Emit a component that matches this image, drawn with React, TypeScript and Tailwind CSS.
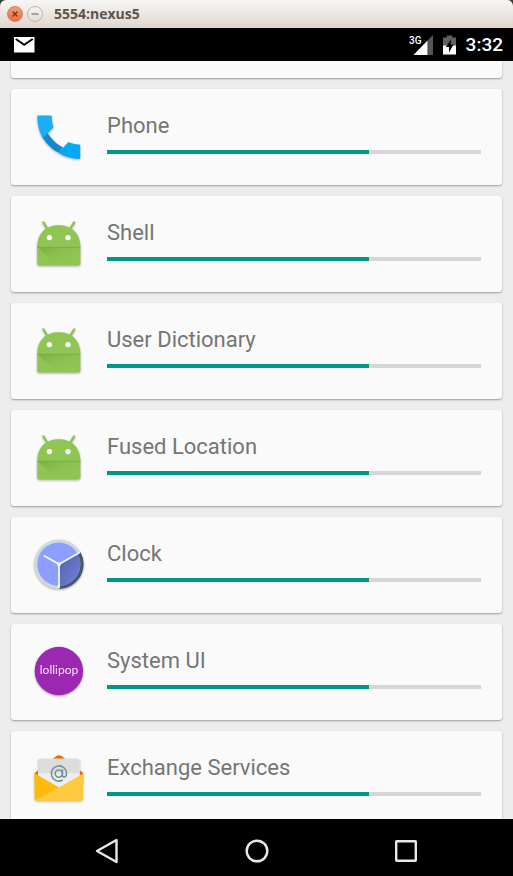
import { useId } from 'react';
import type { ReactNode } from 'react';

function PhoneIcon() {
  return (
    <svg viewBox="0 0 52 52" className="size-[52px] drop-shadow-[0_1px_1px_rgba(0,0,0,0.3)]" aria-hidden="true">
      <path d="M14 21 L9.5 26.5 C13.5 33 19 38.5 25.7 41.8 L30 36.5 C23 33 18.5 28 14 21Z" fill="#0f8ad0" />
      <path d="M5.3 4.6 H17.7 Q18.7 4.6 18.7 5.6 C18.8 9 19.4 12.5 20.4 16.5 L15 22 L9.7 27.2 C6 20.5 4.3 14 4.3 5.6 Q4.3 4.6 5.3 4.6Z" fill="#1caef5" />
      <path d="M35.3 31.2 C39 32.5 42 33.2 46 33.4 Q47.2 33.5 47.2 34.5 V46.9 Q47.2 47.9 46.2 47.9 C38.5 47.9 32 45.8 25.5 41.8Z" fill="#03a9f4" />
    </svg>
  );
}

function AndroidIcon() {
  const shade = useId();
  return (
    <svg viewBox="0 0 52 52" className="size-[52px] drop-shadow-[0_1px_1px_rgba(0,0,0,0.3)]" aria-hidden="true">
      <defs>
        <linearGradient id={shade} x1="0" y1="0" x2="1" y2="1">
          <stop offset="0" stopColor="#689f38" stopOpacity="0.55" />
          <stop offset="0.7" stopColor="#7cb342" stopOpacity="0" />
        </linearGradient>
      </defs>
      <path d="M10.4 4.4 L14.5 11 M41.2 4.4 L37.1 11" stroke="#8bc34a" strokeWidth="2.2" strokeLinecap="round" />
      <path d="M4.2 29.3 C4.2 15 13 7.2 25.8 7.2 S47.4 15 47.4 29.3 V45.7 Q47.4 47.5 45.6 47.5 H6 Q4.2 47.5 4.2 45.7Z" fill="#8fc653" />
      <path d="M4.7 29.3 H47.2 V47 H22.5Z" fill={`url(#${shade})`} />
      <path d="M4.2 29.3 H47.4" stroke="#76a844" strokeWidth="0.8" />
      <circle cx="16.4" cy="19.6" r="2.7" fill="#fff" />
      <circle cx="35" cy="19.6" r="2.7" fill="#fff" />
    </svg>
  );
}

function ClockIcon() {
  const shade = useId();
  return (
    <svg viewBox="0 0 52 52" className="size-[52px] drop-shadow-[0_1px_1px_rgba(0,0,0,0.3)]" aria-hidden="true">
      <defs>
        <linearGradient id={shade} x1="0" y1="0" x2="1" y2="1">
          <stop offset="0" stopColor="#5160ac" />
          <stop offset="1" stopColor="#7482d8" />
        </linearGradient>
      </defs>
      <circle cx="25.8" cy="25.2" r="24.6" fill="#cfd8dc" />
      <path d="M26 25.2 L47.3 12.9 A24.6 24.6 0 0 1 26 49.8Z" fill="#455a64" />
      <circle cx="25.8" cy="25.2" r="21.6" fill="#8c9eff" />
      <path d="M26 25.2 L44.5 14.5 A21.6 21.6 0 0 1 26 46.8Z" fill={`url(#${shade})`} />
      <path d="M26 25.2 L10.6 16.5 M26 25.2 L47 13.2 M26 25.2 V49" stroke="#f3f4fa" strokeWidth="1.9" />
      <circle cx="26" cy="25.2" r="1.9" fill="#fff" />
    </svg>
  );
}

function LollipopIcon() {
  return (
    <svg viewBox="0 0 52 52" className="size-[52px] drop-shadow-[0_1px_1px_rgba(0,0,0,0.35)]" aria-hidden="true">
      <circle cx="25.9" cy="25" r="24.2" fill="#9c27b0" />
      <text x="26" y="28" textAnchor="middle" fill="#f6e3f9" className="font-['Lato',sans-serif] text-[12px]">
        lollipop
      </text>
    </svg>
  );
}

function MailIcon() {
  return (
    <svg viewBox="0 0 52 52" className="size-[52px] drop-shadow-[0_1px_1px_rgba(0,0,0,0.25)]" aria-hidden="true">
      <path d="M1.7 20 L23.8 2.8 Q26 1.6 28.2 2.8 L50.2 20 V30 H1.7Z" fill="#ef6c00" />
      <path d="M5 8.4 Q5 5.8 7.6 5.8 H44.2 Q46.8 5.8 46.8 8.4 V36 H5Z" fill="#eeeeee" />
      <path d="M5 8.4 Q5 5.8 7.6 5.8 H44.2 Q46.8 5.8 46.8 8.4 V20.3 H5Z" fill="#dddddd" />
      <g fill="none" stroke="#78909c" strokeWidth="1.6" strokeLinecap="round">
        <circle cx="25.8" cy="20.6" r="3.6" />
        <path d="M29.4 17 V21.8 C29.4 25.2 33.5 24.9 33.5 20.6 A7.6 7.6 0 1 0 29.2 27.3" />
      </g>
      <path d="M1.7 20.4 L25.9 34.4 L50.2 20.4 V44.8 Q50.2 47.7 47.3 47.7 H4.6 Q1.7 47.7 1.7 44.8Z" fill="#ffca3e" />
      <path d="M1.7 20.4 L25.9 34.4 L2.8 47 Q1.7 46.2 1.7 44.8Z" fill="#ffbb0c" />
    </svg>
  );
}

const apps: { name: string; icon: ReactNode }[] = [
  { name: 'Phone', icon: <PhoneIcon /> },
  { name: 'Shell', icon: <AndroidIcon /> },
  { name: 'User Dictionary', icon: <AndroidIcon /> },
  { name: 'Fused Location', icon: <AndroidIcon /> },
  { name: 'Clock', icon: <ClockIcon /> },
  { name: 'System UI', icon: <LollipopIcon /> },
  { name: 'Exchange Services', icon: <MailIcon /> },
];

function AppCard({ name, icon }: { name: string; icon: ReactNode }) {
  const id = useId();
  return (
    <li className="flex h-24 shrink-0 gap-[22px] rounded-[3px] bg-[#fafafa] pt-[22px] pr-[21px] pl-[22px] shadow-[0_1px_2px_rgba(0,0,0,0.35)]">
      <div className="shrink-0">{icon}</div>
      <div className="flex min-w-0 flex-1 flex-col gap-[9px]">
        <label htmlFor={id} className="truncate text-[22px] leading-[30px] text-[#757575]">
          {name}
        </label>
        <progress
          id={id}
          value={70}
          max={100}
          className="block h-1 w-full appearance-none [&::-webkit-progress-bar]:bg-[#d6d6d6] [&::-webkit-progress-value]:bg-[#009688]"
        />
      </div>
    </li>
  );
}

function TitleBar() {
  return (
    <header className="shrink-0 bg-[#3c3b37]">
      <div className="flex h-7 items-center gap-1 rounded-t-md bg-linear-to-b from-[#f8f6f4] to-[#dfd7cf] pl-[7px]">
        <button
          type="button"
          aria-label="Close"
          className="flex size-4 items-center justify-center rounded-full border border-[#c9826a] bg-linear-to-b from-[#f79a78] to-[#ee6b3e]"
        >
          <svg viewBox="0 0 8 8" className="size-2" aria-hidden="true">
            <path d="M1.5 1.5 L6.5 6.5 M6.5 1.5 L1.5 6.5" stroke="#74331d" strokeWidth="1.3" />
          </svg>
        </button>
        <button
          type="button"
          aria-label="Minimize"
          className="flex size-4 items-center justify-center rounded-full border border-[#bdb6ae] bg-linear-to-b from-[#f6f3f0] to-[#e3ddd7]"
        >
          <svg viewBox="0 0 8 8" className="size-2" aria-hidden="true">
            <path d="M0.5 4 H7.5" stroke="#78716a" strokeWidth="1.2" />
          </svg>
        </button>
        <h1 className="pl-[7px] font-['Open_Sans',sans-serif] text-[14px] leading-5 font-bold text-[#5c554d]">5554:nexus5</h1>
      </div>
    </header>
  );
}

function StatusBar() {
  return (
    <div className="flex h-[33px] shrink-0 items-center justify-between bg-black pr-[10px] pl-[14px] text-white">
      <svg viewBox="0 0 21 16" className="h-4 w-[21px]" aria-label="New mail">
        <path d="M0 0 H20.5 V15.5 H0Z" fill="#fff" />
        <path d="M1.8 2 L10.2 7.8 L18.7 2" fill="none" stroke="#000" strokeWidth="2" />
      </svg>
      <div className="flex items-center gap-[10px]">
        <svg viewBox="0 0 24 20" className="h-5 w-6" aria-label="3G signal">
          <path d="M24 0 V20 H18.5 V5.5Z" fill="#555" />
          <path d="M18.5 5.5 V20 H4.5Z" fill="#fff" />
          <text x="0" y="9" fill="#fff" className="font-['Roboto',sans-serif] text-[10px] font-medium">
            3G
          </text>
        </svg>
        <svg viewBox="0 0 13 20" className="h-5 w-[13px]" aria-label="Battery charging">
          <path d="M0 2.5 H3.8 V0.5 H9.2 V2.5 H13 V11 H0Z" fill="#606060" />
          <path d="M0 10.5 H13 V19.5 H0Z" fill="#fff" />
          <path d="M8 4.5 L2.8 12 H6 V17.5 L10.5 9.5 H7.5Z" fill="#000" />
        </svg>
        <time className="pt-px font-['Roboto',sans-serif] text-[19px] leading-6 font-medium">3:32</time>
      </div>
    </div>
  );
}

function NavBar() {
  const button = 'flex flex-1 items-center justify-center';
  return (
    <nav className="flex h-[57px] shrink-0 bg-black px-8 pt-[7px]">
      <button type="button" aria-label="Back" className={button}>
        <svg viewBox="0 0 26 26" className="size-[26px]" aria-hidden="true">
          <path d="M22.5 2 V24 L3 13Z" fill="none" stroke="#e8e8e6" strokeWidth="2.4" strokeLinejoin="round" />
        </svg>
      </button>
      <button type="button" aria-label="Home" className={button}>
        <svg viewBox="0 0 26 26" className="size-[26px]" aria-hidden="true">
          <circle cx="13" cy="13" r="10.3" fill="none" stroke="#e8e8e6" strokeWidth="2.4" />
        </svg>
      </button>
      <button type="button" aria-label="Recent apps" className={button}>
        <svg viewBox="0 0 26 26" className="size-[26px]" aria-hidden="true">
          <rect x="3.2" y="3.2" width="19.6" height="19.6" rx="0.6" fill="none" stroke="#e8e8e6" strokeWidth="2.4" />
        </svg>
      </button>
    </nav>
  );
}

export default function App() {
  return (
    <div className="flex h-screen flex-col overflow-hidden font-['Roboto',sans-serif]">
      <TitleBar />
      <StatusBar />
      <main className="min-h-0 flex-1 overflow-hidden bg-[#ededed]">
        <ul className="flex flex-col gap-[11px] px-[11px]">
          <li className="h-[17px] shrink-0 rounded-b-[3px] bg-[#fafafa] shadow-[0_1px_2px_rgba(0,0,0,0.35)]" />
          {apps.map((app) => (
            <AppCard key={app.name} name={app.name} icon={app.icon} />
          ))}
        </ul>
      </main>
      <NavBar />
    </div>
  );
}
